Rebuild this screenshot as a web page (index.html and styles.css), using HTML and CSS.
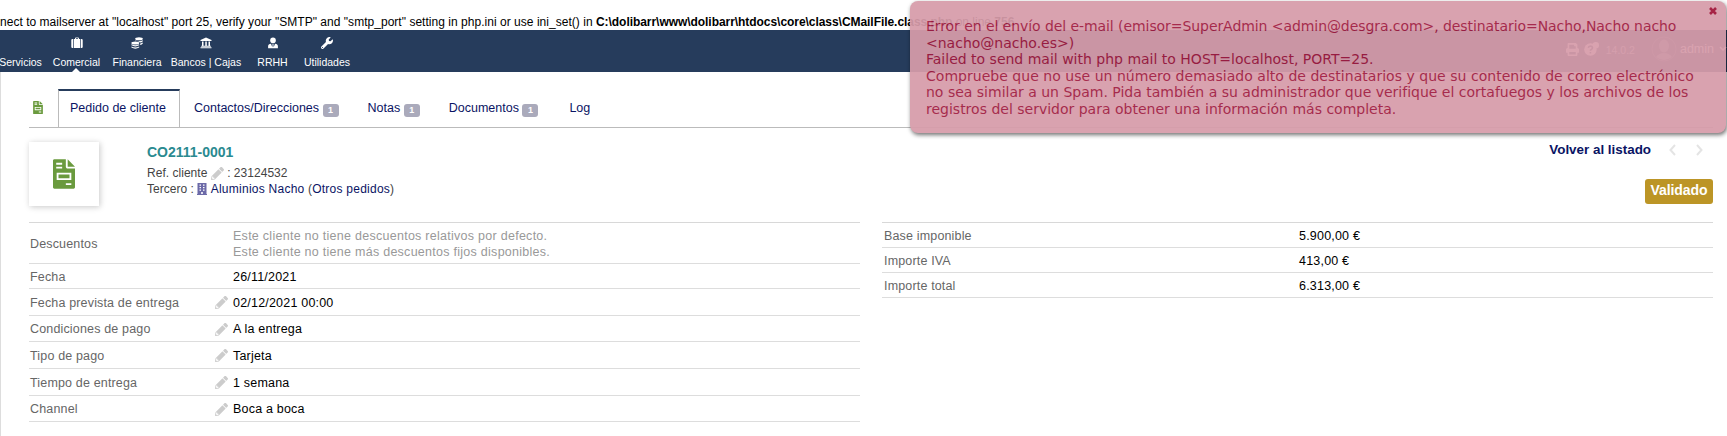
FILE: index.html
```
<!DOCTYPE html>
<html lang="es">
<head>
<meta charset="utf-8">
<title>Pedido de cliente</title>
<link rel="stylesheet" href="styles.css">
</head>
<body>
<svg class="defs" width="0" height="0">
  <symbol id="pencil" viewBox="0 0 512 512"><path d="M498 142l-46 46c-5 5-12 5-17 0L324 77c-5-5-5-12 0-17l46-46c19-19 49-19 68 0l60 60c19 19 19 49 0 68zM284 100L22 362 0 484c-3 16 12 30 28 28l122-22 262-262c5-5 5-12 0-17L301 100c-5-5-12-5-17 0zM88 424h48v36l-64 12-32-32 12-64h36z"/></symbol>
  <symbol id="order" viewBox="0 0 384 512"><path fill-rule="evenodd" d="M24 0h200v128c0 18 14 32 32 32h128v328c0 13-11 24-24 24H24c-13 0-24-11-24-24V24C0 11 11 0 24 0zM56 60v34h104V60zM56 128v34h104v-34zM64 232v128h256V232zM96 264h192v64H96zM224 416v32h96v-32z"/><path d="M256 0v128h128z"/></symbol>
</svg>
<p class="warning"><span class="warning-text">nect to mailserver at "localhost" port 25, verify your "SMTP" and "smtp_port" setting in php.ini or use ini_set() in</span> <b class="warning-path">C:\dolibarr\www\dolibarr\htdocs\core\class\CMailFile.class.php</b> on line <b>756</b></p>
<header class="topbar">
  <nav class="menu">
    <a class="entry servicios"><span class="glyph"></span><span>Servicios</span></a>
    <a class="entry comercial"><svg class="glyph" viewBox="0 0 12 12"><path d="M4 1.500q0-1 1-1h2q1 0 1 1V2h1v9H3V2h1zM5 2h2v-.7H5zM2.300 2v9H1.500Q.3 11 .3 10V3q0-1 1.200-1zM9.700 2h.8q1.200 0 1.200 1v7q0 1-1.200 1h-.8z"/></svg><span>Comercial</span></a>
    <a class="entry financiera"><svg class="glyph" viewBox="0 0 12 12"><ellipse cx="8" cy="1.800" rx="3.800" ry="1.500"/><path d="M11.800 3.300v1q-.8 1.200-3 1.300Q7.500 4 4.200 3.800v-.5q3.800 2 7.600 0zM11.800 5.600v1q-.8 1.100-2.600 1.300V6.500q1.800-.2 2.600-.9z"/><ellipse cx="4.300" cy="5.900" rx="3.900" ry="1.500"/><path d="M.4 7.300q3.900 2 7.800 0v1q-3.900 2.300-7.800 0zM.4 9.500q3.900 2 7.800 0v1q-3.900 2.300-7.800 0z"/></svg><span>Financiera</span></a>
    <a class="entry bancos"><svg class="glyph" viewBox="0 0 12 12"><path d="M6 .5L11.500 3v1H.5V3zM2 4.500h1.500v4.300h1.800V4.500h1.500v4.300h1.700V4.500H10v4.300h.8v1H1.200v-1H2zM.5 10.200h11v1.100H.5z"/></svg><span>Bancos | Cajas</span></a>
    <a class="entry rrhh"><svg class="glyph" viewBox="0 0 12 12"><circle cx="6" cy="3.400" r="2.800"/><path d="M4 6.800L5.300 10.300 5.600 7.700 5.300 6.900h1.400l-.3.800.3 2.600L8 6.800Q10.900 7 10.900 9.300v2H1.100v-2Q1.100 7 4 6.800z"/></svg><span>RRHH</span></a>
    <a class="entry utilidades"><svg class="glyph" viewBox="0 0 512 512"><path d="M507 117c-3-11-16-14-24-6l-74 74-68-11-11-68 74-74c8-8 5-21-6-24C346-6 289 8 248 49c-44 44-56 107-37 163L19 404c-25 25-25 65 0 90s65 25 90 0l192-192c56 19 119 7 163-37 41-41 55-97 43-148zM64 472a24 24 0 110-48 24 24 0 010 48z"/></svg><span>Utilidades</span></a>
  </nav>
  <div class="login">
    <svg class="printer" viewBox="0 0 512 512"><path d="M448 192V77c0-9-3-17-9-23L394 9c-6-6-14-9-23-9H96C78 0 64 14 64 32v160c-35 0-64 29-64 64v112c0 9 7 16 16 16h48v96c0 18 14 32 32 32h320c18 0 32-14 32-32v-96h48c9 0 16-7 16-16V256c0-35-29-64-64-64zm-64 256H128v-96h256zm0-224H128V64h192v48c0 9 7 16 16 16h48z"/></svg>
    <svg class="help" viewBox="0 0 14 13"><circle cx="6" cy="7" r="5.800"/><circle cx="11" cy="3" r="3"/><path class="mark" d="M4 5.500Q4.200 3.800 6 3.800t2 1.600Q8 6.500 6 7.600v.6M6 9.300v1.400"/></svg>
    <span class="version">14.0.2</span>
    <svg class="avatar" viewBox="0 0 26 26"><circle class="ring" cx="13" cy="13" r="12"/><ellipse cx="13" cy="10" rx="5" ry="6.500"/><path d="M5 21q3-4 8-4t8 4q-8 6-16 0z"/></svg>
    <span class="user">admin</span>
    <svg class="caret" viewBox="0 0 8 6"><path d="M1 1l3 3 3-3"/></svg>
  </div>
</header>
<main class="page">
  <div class="tabs">
    <svg class="tab-icon"><use href="#order"/></svg>
    <a class="tab active">Pedido de cliente</a>
    <a class="tab">Contactos/Direcciones<span class="badge">1</span></a>
    <a class="tab">Notas<span class="badge">1</span></a>
    <a class="tab">Documentos<span class="badge">1</span></a>
    <a class="tab last">Log</a>
  </div>
  <section class="banner">
    <div class="photo"><svg class="photo-icon"><use href="#order"/></svg></div>
    <div class="identity">
      <h1 class="ref">CO2111-0001</h1>
      <p class="detail">Ref. cliente <svg class="pencil"><use href="#pencil"/></svg> : 23124532</p>
      <p class="detail">Tercero : <svg class="building" viewBox="0 0 10 12"><path fill-rule="evenodd" d="M.5 0h9v11h.5v1H0v-1h.5zM2.500 1.500v1.300H4V1.500zM6 1.500v1.300h1.500V1.500zM2.500 4v1.300H4V4zM6 4v1.300h1.500V4zM2.500 6.500v1.300H4V6.500zM6 6.500v1.300h1.500V6.500zM4.200 9v2h1.600V9z"/></svg> <a class="link">Aluminios Nacho</a> <span class="others">(<a class="link">Otros pedidos</a>)</span></p>
    </div>
    <div class="aside">
      <div class="pager"><a class="back">Volver al listado</a><svg class="chevron" viewBox="0 0 7 12"><path d="M6 1L1.500 6 6 11"/></svg><svg class="chevron" viewBox="0 0 7 12"><path d="M1 1l4.500 5L1 11"/></svg></div>
      <span class="status">Validado</span>
    </div>
  </section>
  <div class="columns">
    <div class="table">
      <div class="row discounts"><span class="label">Descuentos</span><span class="value muted">Este cliente no tiene descuentos relativos por defecto.<br>Este cliente no tiene más descuentos fijos disponibles.</span></div>
      <div class="row"><span class="label">Fecha</span><span class="value">26/11/2021</span></div>
      <div class="row tall"><span class="label">Fecha prevista de entrega</span><svg class="pencil"><use href="#pencil"/></svg><span class="value">02/12/2021 00:00</span></div>
      <div class="row medium"><span class="label">Condiciones de pago</span><svg class="pencil"><use href="#pencil"/></svg><span class="value">A la entrega</span></div>
      <div class="row tall"><span class="label">Tipo de pago</span><svg class="pencil"><use href="#pencil"/></svg><span class="value">Tarjeta</span></div>
      <div class="row tall"><span class="label">Tiempo de entrega</span><svg class="pencil"><use href="#pencil"/></svg><span class="value">1 semana</span></div>
      <div class="row medium"><span class="label">Channel</span><svg class="pencil"><use href="#pencil"/></svg><span class="value">Boca a boca</span></div>
    </div>
    <div class="table totals">
      <div class="row"><span class="label">Base imponible</span><span class="value">5.900,00 €</span></div>
      <div class="row"><span class="label">Importe IVA</span><span class="value">413,00 €</span></div>
      <div class="row"><span class="label">Importe total</span><span class="value">6.313,00 €</span></div>
    </div>
  </div>
</main>
<div class="toast">
  <svg class="close" viewBox="0 0 10 10"><path d="M2 2l6 6M8 2L2 8"/></svg>
  <p><span class="tight">Error en el envío del e-mail (emisor=SuperAdmin &lt;admin@desgra.com&gt;, destinatario=Nacho,Nacho nacho</span><br>&lt;nacho@nacho.es&gt;)<br>Failed to send mail with php mail to HOST=localhost, PORT=25.<br><span class="loose">Compruebe que no use un número demasiado alto de destinatarios y que su contenido de correo electrónico</span><br>no sea similar a un Spam. Pida también a su administrador que verifique el cortafuegos y los archivos de los<br>registros del servidor para obtener una información más completa.</p>
</div>
</body>
</html>
```
FILE: styles.css
```
* { box-sizing: border-box; }
body { margin: 0; height: 436px; overflow: hidden; background: #fff; color: #000; font: 12.5px/16px "Liberation Sans", Arial, sans-serif; position: relative; }
p, h1 { margin: 0; }
.defs { position: absolute; }
.warning { height: 30px; padding-top: 14px; font-size: 12px; white-space: nowrap; }
.warning-text { letter-spacing: .03px; }
.warning-path { letter-spacing: -.05px; }
.topbar { height: 42px; background: #263c5c; color: #fff; display: flex; justify-content: space-between; overflow: hidden; }
.menu { display: flex; font-size: 10.5px; line-height: 14px; }
.entry { display: flex; flex-direction: column; align-items: center; padding-top: 7px; gap: 6px; white-space: nowrap; position: relative; }
.glyph { width: 12px; height: 12px; fill: #fff; display: block; }
.servicios { width: 41px; }
.comercial { width: 71px; }
.financiera { width: 50px; }
.bancos { width: 88px; }
.rrhh { width: 45px; }
.utilidades { width: 64px; }
.comercial::after { content: ""; position: absolute; bottom: 0; left: 31px; border: 4px solid transparent; border-top: 0; border-bottom-color: #fff; }
.login { display: flex; align-items: center; padding-bottom: 4px; font-size: 12.5px; }
.login svg { fill: #fff; flex: none; }
.login .printer { width: 13px; height: 13px; margin-right: 5px; }
.login .help { width: 15px; height: 14px; margin-right: 7px; }
.help .mark { fill: none; stroke: #263c5c; stroke-width: 1.5; }
.version { font-size: 10.5px; margin-right: 16px; padding-top: 1px; opacity: .7; }
.avatar { width: 26px; height: 26px; margin-right: 3px; opacity: .35; }
.avatar .ring { fill: none; stroke: #fff; stroke-width: .6; }
.caret { width: 8px; height: 6px; margin-left: 5px; }
.login .caret path { fill: none; stroke: #fff; stroke-width: 1.5; }
.page { height: 364px; border-left: 1px solid #ddd; padding: 17px 14px 0 28px; }
.tabs { height: 39px; border-bottom: 1px solid #bbb; display: flex; }
.tab-icon { width: 10px; height: 13px; fill: #6a9a3e; margin: 12px 15px 0 4px; }
.tab { color: #0a1464; padding: 11px 15px 0 14px; font-size: 12.5px; white-space: nowrap; }
.tab.active { border: solid #bbb; border-width: 2px 1px 0; border-top-color: #263c5c; padding: 9px 14px 0 11px; width: 122px; }
.tab.last { padding-left: 16px; }
.badge { display: inline-block; width: 16px; height: 13px; margin-left: 3.5px; border-radius: 3px; background: #aaaabb; color: #fff; font: bold 9px/13px "Liberation Sans", Arial, sans-serif; text-align: center; position: relative; top: 1px; }
.banner { height: 94px; display: flex; padding-top: 14px; }
.photo { width: 70px; height: 64px; display: flex; align-items: center; justify-content: center; box-shadow: 1px 1px 6px rgba(0,0,0,.22); }
.photo-icon { width: 22px; height: 30px; fill: #6a9a3e; }
.identity { margin-left: 48px; flex: 1; font-size: 12px; letter-spacing: .03px; color: #444; }
.ref { color: #2a8a90; font-size: 14px; letter-spacing: 0; line-height: 21px; height: 23px; }
.detail { line-height: 16px; height: 16px; white-space: nowrap; }
.pencil { width: 13px; height: 13px; fill: #ccc; }
.detail .pencil { vertical-align: -3px; }
.building { width: 10px; height: 12px; fill: #6c6aa8; vertical-align: -2px; }
.others, .link { letter-spacing: .25px; }
.link { color: #0a1464; }
.aside { display: flex; flex-direction: column; align-items: flex-end; }
.pager { display: flex; align-items: center; height: 16px; padding-right: 10px; }
.back { color: #0a1464; font-weight: bold; font-size: 13.4px; margin-right: 18px; }
.chevron { width: 7px; height: 12px; fill: none; stroke: #e4e4e4; stroke-width: 2; }
.chevron + .chevron { margin-left: 20px; }
.status { margin-top: 21px; width: 68px; height: 25px; border-radius: 3px; background: #bc9526; color: #fff; font: bold 14px/23px "Liberation Sans", Arial, sans-serif; letter-spacing: -.1px; text-align: center; }
.columns { display: grid; grid-template-columns: 831px 831px; gap: 22px; align-items: start; }
.table { border-top: 1px solid #d8d8d8; }
.row { display: flex; align-items: center; height: 25px; border-bottom: 1px solid #ddd; padding: 1px 0 0 1px; white-space: nowrap; }
.label { width: 203px; color: #666; letter-spacing: .16px; }
.value { letter-spacing: .2px; }
.row .pencil { margin-left: -18px; margin-right: 5px; }
.discounts { height: 41px; }
.medium { height: 26px; }
.tall { height: 27px; }
.muted { color: #999; letter-spacing: .27px; }
.totals .row { padding-left: 2px; }
.totals .label { width: 415px; }
.toast { position: absolute; left: 910px; top: 1px; width: 816px; height: 132px; padding: 17px 16px; border-radius: 8px; background: #d79caa; opacity: .93; box-shadow: 1px 2px 4px rgba(0,0,0,.6); color: #a01a40; font: 14px/16.6px "DejaVu Sans", Verdana, sans-serif; white-space: nowrap; }
.tight { letter-spacing: -.07px; }
.loose { letter-spacing: .03px; }
.close { position: absolute; right: 8px; top: 5px; width: 10px; height: 10px; fill: none; stroke: #a01438; stroke-width: 2.6; }
```
